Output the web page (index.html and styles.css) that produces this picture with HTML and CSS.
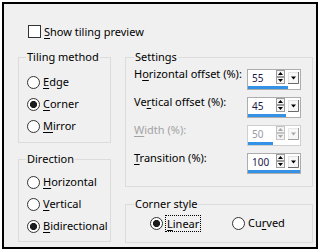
FILE: index.html
```html
<!DOCTYPE html>
<html>
<head>
<meta charset="utf-8">
<link rel="stylesheet" href="styles.css">
</head>
<body>
<div class="dialog">
  <div class="check"><span class="box"></span><span><u>S</u>how tiling preview</span></div>
  <div class="cols">
    <div class="col col-left">
      <fieldset class="grp tiling">
        <legend>Tiling method</legend>
        <div class="radio"><span class="rb"></span><span><u>E</u>dge</span></div>
        <div class="radio"><span class="rb on"></span><span><u>C</u>orner</span></div>
        <div class="radio"><span class="rb"></span><span><u>M</u>irror</span></div>
      </fieldset>
      <fieldset class="grp direction">
        <legend>Direction</legend>
        <div class="radio"><span class="rb"></span><span><u>H</u>orizontal</span></div>
        <div class="radio"><span class="rb"></span><span><u>V</u>ertical</span></div>
        <div class="radio"><span class="rb on"></span><span><u>B</u>idirectional</span></div>
      </fieldset>
    </div>
    <div class="col col-right">
      <fieldset class="grp settings">
        <legend>Settings</legend>
        <div class="field">
          <span class="lbl">H<u>o</u>rizontal offset (%):</span>
          <div class="spin">
            <div class="spin-row">
              <span class="val">55</span>
              <svg class="ud" width="9" height="14" viewBox="0 0 9 14"><rect x=".5" y=".5" width="8" height="6" fill="#f4f4f4" stroke="#9c9c9c"/><path d="M2 5h5L4.5 2z" fill="#000"/><rect x=".5" y="7.5" width="8" height="6" fill="#f4f4f4" stroke="#9c9c9c"/><path d="M2 9h5l-2.5 3z" fill="#000"/></svg>
              <svg class="drop" width="11" height="12" viewBox="0 0 11 12"><rect width="11" height="12" fill="#f7f7f7"/><path d="M.5 11.5V.5h10" stroke="#e3e3e3" fill="none"/><path d="M0 11.5h10.5V0" stroke="#6a6a6a" fill="none"/><path d="M3 4.5h5l-2.5 3z" fill="#000"/></svg>
            </div>
            <div class="bar" style="width:40px"></div>
          </div>
        </div>
        <div class="field">
          <span class="lbl">Ve<u>r</u>tical offset (%):</span>
          <div class="spin">
            <div class="spin-row">
              <span class="val">45</span>
              <svg class="ud" width="9" height="14" viewBox="0 0 9 14"><rect x=".5" y=".5" width="8" height="6" fill="#f4f4f4" stroke="#9c9c9c"/><path d="M2 5h5L4.5 2z" fill="#000"/><rect x=".5" y="7.5" width="8" height="6" fill="#f4f4f4" stroke="#9c9c9c"/><path d="M2 9h5l-2.5 3z" fill="#000"/></svg>
              <svg class="drop" width="11" height="12" viewBox="0 0 11 12"><rect width="11" height="12" fill="#f7f7f7"/><path d="M.5 11.5V.5h10" stroke="#e3e3e3" fill="none"/><path d="M0 11.5h10.5V0" stroke="#6a6a6a" fill="none"/><path d="M3 4.5h5l-2.5 3z" fill="#000"/></svg>
            </div>
            <div class="bar" style="width:38px"></div>
          </div>
        </div>
        <div class="field disabled">
          <span class="lbl"><u>W</u>idth (%):</span>
          <div class="spin">
            <div class="spin-row">
              <span class="val">50</span>
              <svg class="ud" width="9" height="14" viewBox="0 0 9 14"><rect x=".5" y=".5" width="8" height="6" fill="#f4f4f4" stroke="#c4c4c4"/><path d="M2 5h5L4.5 2z" fill="#a8a8a8"/><rect x=".5" y="7.5" width="8" height="6" fill="#f4f4f4" stroke="#c4c4c4"/><path d="M2 9h5l-2.5 3z" fill="#a8a8a8"/></svg>
              <svg class="drop" width="11" height="12" viewBox="0 0 11 12"><rect width="11" height="12" fill="#f7f7f7"/><path d="M.5 11.5V.5h10" stroke="#e8e8e8" fill="none"/><path d="M0 11.5h10.5V0" stroke="#a0a0a0" fill="none"/><path d="M3 4.5h5l-2.5 3z" fill="#a8a8a8"/></svg>
            </div>
            <div class="bar" style="width:25px"></div>
          </div>
        </div>
        <div class="field">
          <span class="lbl"><u>T</u>ransition (%):</span>
          <div class="spin">
            <div class="spin-row">
              <span class="val">100</span>
              <svg class="ud" width="9" height="14" viewBox="0 0 9 14"><rect x=".5" y=".5" width="8" height="6" fill="#f4f4f4" stroke="#9c9c9c"/><path d="M2 5h5L4.5 2z" fill="#000"/><rect x=".5" y="7.5" width="8" height="6" fill="#f4f4f4" stroke="#9c9c9c"/><path d="M2 9h5l-2.5 3z" fill="#000"/></svg>
              <svg class="drop" width="11" height="12" viewBox="0 0 11 12"><rect width="11" height="12" fill="#f7f7f7"/><path d="M.5 11.5V.5h10" stroke="#e3e3e3" fill="none"/><path d="M0 11.5h10.5V0" stroke="#6a6a6a" fill="none"/><path d="M3 4.5h5l-2.5 3z" fill="#000"/></svg>
            </div>
            <div class="bar" style="width:52px"></div>
          </div>
        </div>
      </fieldset>
      <fieldset class="grp corner">
        <legend>Corner style</legend>
        <div class="hradios">
          <div class="radio linear"><span class="rb on"></span><span class="focus"><u>L</u>inear</span></div>
          <div class="radio"><span class="rb"></span><span>Cu<u>r</u>ved</span></div>
        </div>
      </fieldset>
    </div>
  </div>
</div>
</body>
</html>
```
FILE: styles.css
```css
html, body {
  margin: 0;
  background: #ffffff;
}
body {
  font-family: "Noto Sans", "Open Sans", sans-serif;
  font-size: 11px;
  line-height: 16px;
  color: #000;
}
u {
  text-decoration-thickness: 1px;
  text-underline-offset: 2px;
}
.dialog {
  margin: 2px 0 0 2px;
  width: 316px;
  height: 247px;
  box-sizing: border-box;
  border: 2px solid #000;
  background: #f0f0f0;
  padding: 21px 0 0 14px;
}
.check {
  display: flex;
  align-items: center;
  height: 13px;
  margin-left: 10px;
  gap: 3px;
}
.box {
  width: 13px;
  height: 13px;
  box-sizing: border-box;
  border: 1px solid #333;
  background: #fff;
}
.cols {
  display: flex;
  gap: 14px;
  margin-top: 11px;
}
.col {
  display: flex;
  flex-direction: column;
  gap: 8px;
}
.col-left { width: 93px; }
.col-right { width: 188px; gap: 9px; }
.grp {
  margin: 0;
  box-sizing: border-box;
  border: 1px solid #dcdcdc;
  padding: 0 7px;
  min-width: 0;
}
.grp legend {
  padding: 0 1px;
  line-height: 16px;
  height: 16px;
}
.tiling { height: 94px; padding-top: 6px; }
.direction { height: 91px; padding-top: 4px; }
.radio {
  display: flex;
  align-items: center;
  gap: 3px;
  height: 22px;
  margin-left: 1px;
  white-space: nowrap;
}
.rb {
  flex: none;
  width: 13px;
  height: 13px;
  box-sizing: border-box;
  border: 1px solid #333;
  border-radius: 50%;
  background: #fff;
}
.rb.on {
  background: radial-gradient(circle, #1c1c1c 0, #1c1c1c 3.2px, #fff 3.9px);
}
.settings {
  height: 138px;
  padding: 4px 8px 0 8px;
  display: flex;
  flex-direction: column;
  gap: 7px;
}
.field {
  display: grid;
  grid-template-columns: 113px 54px;
  height: 21px;
}
.lbl {
  align-self: start;
  margin-top: -3px;
  white-space: nowrap;
}
.disabled .lbl { color: #a3a3a3; }
.spin {
  width: 54px;
  height: 21px;
  box-sizing: border-box;
  border: 1px solid #adadad;
  background: #fff;
  display: flex;
  flex-direction: column;
}
.disabled .spin { border-color: #cfcfcf; }
.spin-row {
  display: flex;
  align-items: flex-start;
  height: 16px;
}
.val {
  flex: 1;
  padding-left: 4px;
  font-size: 10px;
  line-height: 15px;
  margin-top: 1px;
  color: #1c1a4c;
}
.disabled .val { color: #9a9aa8; }
.ud {
  display: block;
  flex: none;
}
.drop {
  display: block;
  flex: none;
  margin: 2px 1px 0 3px;
}
.bar {
  height: 3px;
  background: #3392e6;
}
.corner {
  height: 47px;
  padding: 0 8px;
}
.hradios {
  display: flex;
  margin-left: 16px;
}
.hradios .radio { margin-left: 0; }
.linear { width: 82px; }
.focus {
  outline: 1px dotted #000;
  outline-offset: 0;
  padding: 0 1px;
  line-height: 15px;
}
```
